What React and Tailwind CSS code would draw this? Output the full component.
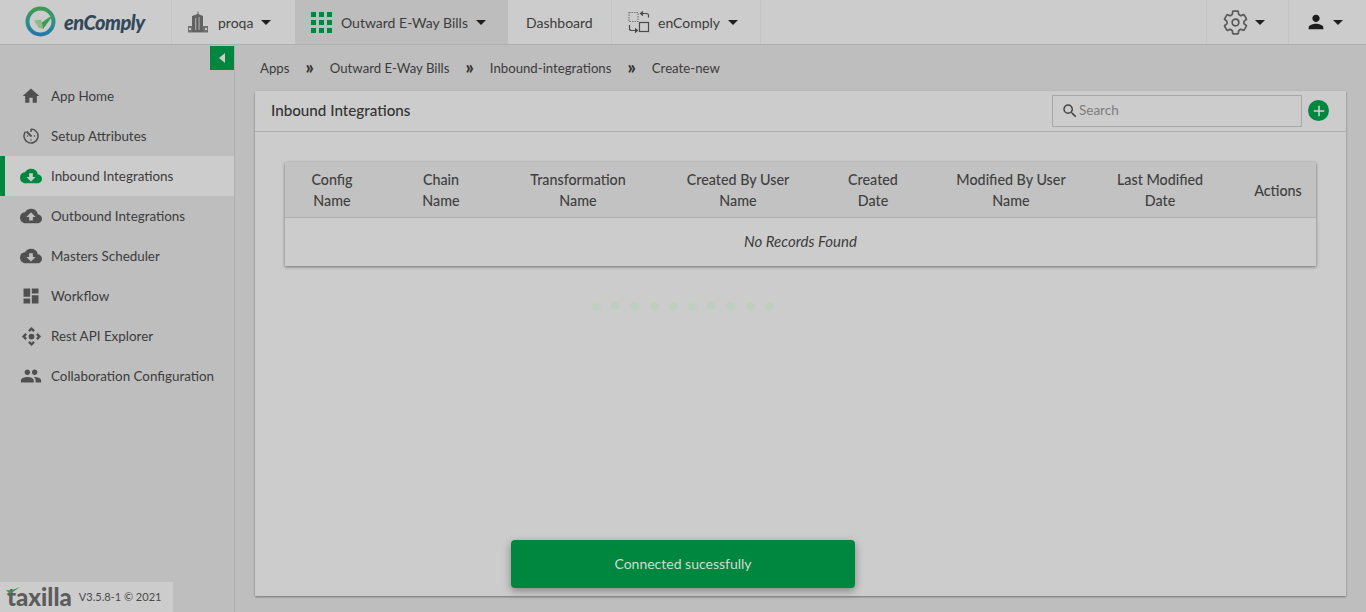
import { MdHome, MdCloudDownload, MdCloudUpload, MdDashboard, MdPeople, MdControlCamera, MdPerson, MdSearch, MdAdd } from 'react-icons/md'
import { IoSettingsOutline } from 'react-icons/io5'

const font = { fontFamily: 'Lato, sans-serif' }

function Caret({ className = '' }) {
  return <span className={`inline-block w-0 h-0 border-x-[5px] border-x-transparent border-t-[5px] border-t-[#1f1f1f] ${className}`} />
}

function Logo() {
  return (
    <svg width="34" height="32" viewBox="0 0 34 32" className="shrink-0">
      <defs>
        <linearGradient id="ring" x1="0" y1="0" x2="0" y2="1">
          <stop offset="0" stopColor="#3d9a55" />
          <stop offset="0.55" stopColor="#2a8f8c" />
          <stop offset="1" stopColor="#2478a8" />
        </linearGradient>
      </defs>
      <circle cx="16.5" cy="15.5" r="13" fill="none" stroke="url(#ring)" strokeWidth="4" />
      <path d="M10 14.5 L17 13.5 L18 16.5 L30 8 L19 23 L15 22 Z" fill="#8db98c" />
      <path d="M18 16.5 L30 8 L19 23 Z" fill="#3d9a55" />
    </svg>
  )
}

function BuildingIcon() {
  return (
    <svg width="22" height="22" viewBox="0 0 22 22" fill="#707070">
      <rect x="1" y="15" width="20" height="6.5" />
      <path d="M5 21 V5 L10.5 3 V0.5 L11.5 0.5 V3 L16 5 V21 Z" fill="#626262" />
      <path d="M8 7h1.2v12H8zM11.5 6h1.2v13h-1.2z" fill="#a5a5a5" />
      <path d="M2 17h2v2H2zM18 17h2v2h-2z" fill="#cccccc" />
    </svg>
  )
}

function GridIcon() {
  return (
    <div className="grid grid-cols-3 gap-[3px] w-[21px] shrink-0">
      {[0, 1, 2, 3, 4, 5, 6, 7, 8].map((i) => (
        <span key={i} className="w-[5px] h-[5px] bg-[#00873f]" />
      ))}
    </div>
  )
}

function SwapIcon() {
  return (
    <svg width="22" height="22" viewBox="0 0 22 22" fill="none" stroke="#4a4a4a" strokeWidth="1.2">
      <rect x="1" y="1.5" width="9" height="9" strokeDasharray="1.5 1" stroke="#777" />
      <rect x="11.5" y="11.5" width="9" height="9" />
      <path d="M13 2.5 h5.5 a2 2 0 0 1 2 2 v2" />
      <path d="M15 0.5 L12.5 2.5 L15 4.5" fill="#4a4a4a" />
      <path d="M1.5 14 v3.5 a2 2 0 0 0 2 2 h5.5" />
      <path d="M7 17.5 L9.5 19.5 L7 21.5" fill="#4a4a4a" />
    </svg>
  )
}

// stopwatch style dial used for Setup Attributes
function DialIcon() {
  return (
    <svg width="16" height="16" viewBox="0 0 16 16" fill="none" stroke="#505050" strokeWidth="1.5">
      <path d="M8 1 A7 7 0 1 1 2.4 3.8" />
      <path d="M8 1 V4" />
      <path d="M3.5 3.5 L8.5 8.5" strokeWidth="1.8" />
      <circle cx="4.5" cy="8" r="0.8" fill="#505050" stroke="none" />
      <circle cx="8" cy="12" r="0.8" fill="#505050" stroke="none" />
      <circle cx="11.5" cy="8" r="0.8" fill="#505050" stroke="none" />
    </svg>
  )
}

const navItems = [
  { label: 'App Home', icon: <MdHome size={20} /> },
  { label: 'Setup Attributes', icon: <DialIcon /> },
  { label: 'Inbound Integrations', icon: <MdCloudDownload size={22} />, active: true },
  { label: 'Outbound Integrations', icon: <MdCloudUpload size={22} /> },
  { label: 'Masters Scheduler', icon: <MdCloudDownload size={22} /> },
  { label: 'Workflow', icon: <MdDashboard size={20} /> },
  { label: 'Rest API Explorer', icon: <MdControlCamera size={23} /> },
  { label: 'Collaboration Configuration', icon: <MdPeople size={22} /> },
]

const columns = [
  { w: 'w-[94px]', lines: ['Config', 'Name'] },
  { w: 'w-[124px]', lines: ['Chain', 'Name'] },
  { w: 'w-[150px]', lines: ['Transformation', 'Name'] },
  { w: 'w-[170px]', lines: ['Created By User', 'Name'] },
  { w: 'w-[100px]', lines: ['Created', 'Date'] },
  { w: 'w-[176px]', lines: ['Modified By User', 'Name'] },
  { w: 'w-[122px]', lines: ['Last Modified', 'Date'] },
  { w: 'w-[95px] pl-[19px]', lines: ['Actions'] },
]

const crumbs = ['Apps', 'Outward E-Way Bills', 'Inbound-integrations', 'Create-new']

export default function App() {
  return (
    <div style={font} className="relative h-screen overflow-hidden flex flex-col bg-[#bebebe] text-[14px] text-[#3c3c3c]">
      {/* Header */}
      <header className="h-[45px] shrink-0 flex bg-[#cccccc] border-b border-[#aeaeae]">
        <div className="w-[172px] flex items-center pl-[24px] gap-[6px] border-r border-[#c4c4c4]">
          <Logo />
          <span className="text-[20px] font-black italic text-[#33475a] tracking-[-0.5px]">enComply</span>
        </div>
        <div className="w-[123px] flex items-center pl-[15px] gap-[9px]">
          <BuildingIcon />
          <span>proqa</span>
          <Caret className="-ml-[1px]" />
        </div>
        <div className="w-[213px] flex items-center pl-[16px] gap-[9px] bg-[#bdbdbd]">
          <GridIcon />
          <span>Outward E-Way Bills</span>
          <Caret className="-ml-[1px]" />
        </div>
        <div className="w-[104px] flex items-center pl-[18px] border-r border-[#c4c4c4]">Dashboard</div>
        <div className="w-[149px] flex items-center pl-[16px] gap-[8px] border-r border-[#c4c4c4]">
          <SwapIcon />
          <span>enComply</span>
          <Caret />
        </div>
        <div className="flex-1" />
        <div className="w-[82px] flex items-center pl-[15px] gap-[6px] border-l border-[#c4c4c4]">
          <IoSettingsOutline size={27} className="text-[#5a5a5a]" />
          <Caret />
        </div>
        <div className="w-[78px] flex items-center pl-[16px] gap-[6px] border-l border-[#c4c4c4]">
          <MdPerson size={22} className="text-[#1c1c1c]" />
          <Caret />
        </div>
      </header>

      <div className="flex-1 flex min-h-0">
        {/* Sidebar */}
        <aside className="relative w-[235px] shrink-0 border-r border-[#aeaeae] pt-[31px] flex flex-col">
          <button className="absolute top-[1px] right-0 w-[24px] h-[24px] flex items-center justify-center bg-[#00873f]">
            <span className="w-0 h-0 border-y-[5px] border-y-transparent border-r-[6px] border-r-[#cccccc]" />
          </button>
          {navItems.map((item) => (
            <div
              key={item.label}
              className={`h-[40px] flex items-center text-[13.4px] ${item.active ? 'bg-[#cccccc] border-l-[5px] border-[#00873f] pl-[16px]' : 'pl-[21px]'}`}
            >
              <span className={`w-[20px] flex justify-center ${item.active ? 'text-[#00873f]' : 'text-[#505050]'}`}>
                <span className="shrink-0">{item.icon}</span>
              </span>
              <span className="ml-[10px]">{item.label}</span>
            </div>
          ))}
          <div className="mt-auto w-[173px] h-[30px] flex items-center pl-[7px] bg-[#cccccc]">
            <span className="relative text-[24px] leading-none font-black text-[#5c5c5c]">
              taxilla
              <svg width="15" height="10" viewBox="0 0 15 10" className="absolute -left-[1px] top-[1px]">
                <path d="M0 4 L4 8 L14 1 L5 4.5 Z" fill="#3f8f55" />
              </svg>
            </span>
            <span className="ml-[7px] text-[11px] text-[#4a4a4a]">V3.5.8-1 © 2021</span>
          </div>
        </aside>

        {/* Main */}
        <main className="flex-1 min-w-0 flex flex-col pl-[20px] pr-[20px] pb-[16px]">
          <nav className="h-[46px] shrink-0 flex items-center pl-[5px] pt-[2px] text-[13.2px]">
            {crumbs.map((c, i) => (
              <span key={c} className="flex items-center">
                {i > 0 && <span className="mx-[16px] text-[18px] font-black leading-none text-[#333] -mt-[3px]">»</span>}
                {c}
              </span>
            ))}
          </nav>

          <section className="flex-1 bg-[#cccccc] shadow-[0_1px_2px_rgba(0,0,0,0.4)] flex flex-col">
            <div className="h-[41px] shrink-0 flex items-center pl-[16px] pr-[17px] pb-[1px] border-b border-[#aeaeae]">
              <h1 className="text-[15.2px] font-medium text-[#333]">Inbound Integrations</h1>
              <div className="ml-auto w-[250px] h-[32px] flex items-center pl-[8px] border border-[#a8a8a8] text-[13.5px] text-[#7d7d7d]">
                <MdSearch size={18} className="text-[#444]" />
                <span>Search</span>
              </div>
              <span className="ml-[6px] w-[21px] h-[21px] rounded-full bg-[#00873f] flex items-center justify-center text-[#d5d5d5]">
                <MdAdd size={18} />
              </span>
            </div>

            <div className="pt-[30px] px-[30px]">
              <table className="w-full table-fixed border-collapse shadow-[0_1px_3px_rgba(0,0,0,0.45)]">
                <thead>
                  <tr className="h-[55px] bg-[#c2c2c2] border-b border-[#aeaeae]">
                    {columns.map((col) => (
                      <th key={col.lines[0]} className={`${col.w} pt-[2px] font-medium text-[14.3px] leading-[21px] text-center text-[#404040]`}>
                        {col.lines.map((l) => (
                          <div key={l}>{l}</div>
                        ))}
                      </th>
                    ))}
                  </tr>
                </thead>
                <tbody>
                  <tr className="h-[49px]">
                    <td colSpan={8} className="pb-[1px] text-center italic text-[15px] text-[#3c3c3c]">No Records Found</td>
                  </tr>
                </tbody>
              </table>
            </div>
          </section>
        </main>
      </div>

      {/* Loading dots */}
      <div className="absolute top-[302px] left-[592px] flex gap-[10.2px]">
        {[0, 1, 2, 3, 4, 5, 6, 7, 8, 9].map((i) => (
          <span key={i} className="w-[9px] h-[9px] rounded-full bg-[#bfd0c0]" />
        ))}
      </div>

      {/* Toast */}
      <div className="absolute top-[540px] left-[511px] w-[344px] h-[48px] pb-[1px] rounded-[4px] bg-[#00873f] flex items-center justify-center text-[14px] text-[#cfdcd2] shadow-[0_3px_8px_rgba(0,0,0,0.35)]">
        Connected sucessfully
      </div>
    </div>
  )
}
